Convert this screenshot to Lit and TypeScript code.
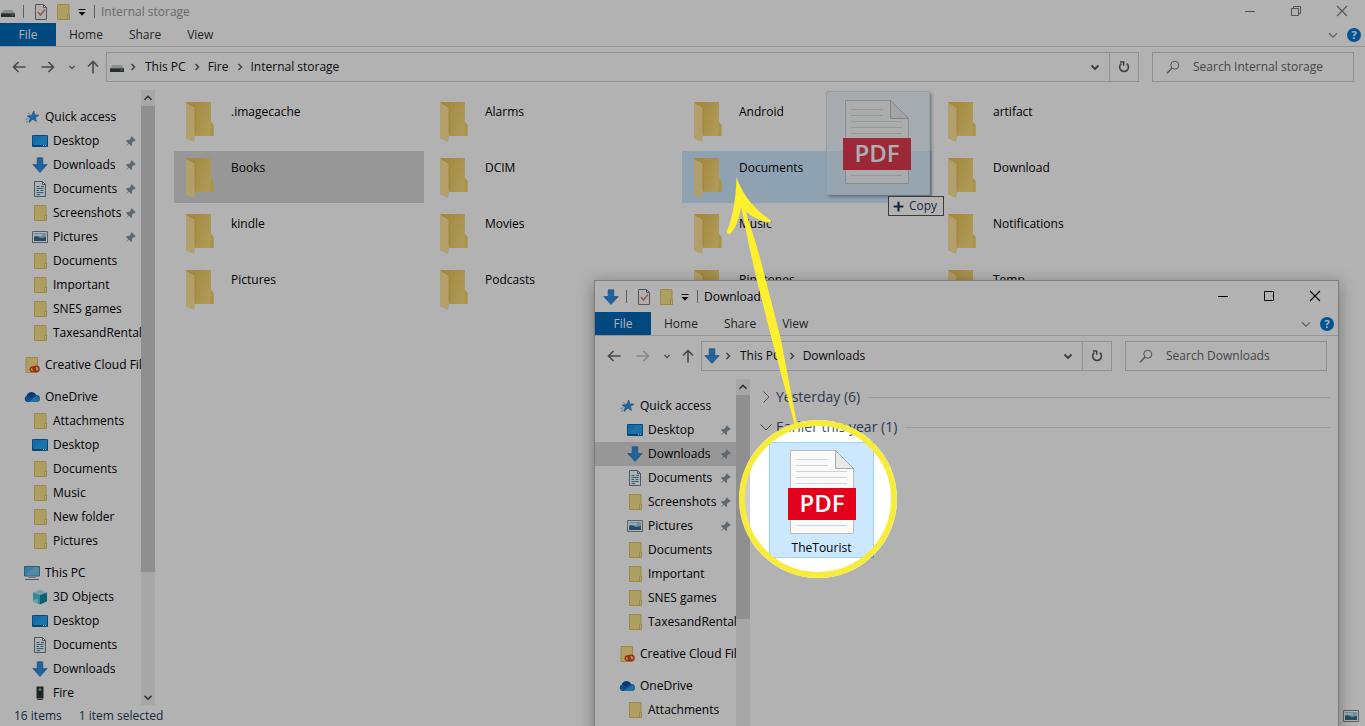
import { LitElement, html, svg, css, nothing } from "lit";
import { customElement, property } from "lit/decorators.js";
import { classMap } from "lit/directives/class-map.js";

const icon = (size: number, body: unknown) =>
  html`<svg class="glyph" width=${size} height=${size} viewBox="0 0 16 16" fill="none" aria-hidden="true">${body}</svg>`;

const ICONS: Record<string, unknown> = {
  drive: svg`<path d="M3.500 6h9L15 9.500H1z" fill="#c9cbcc"/><path d="M1 9.300h14V13H1z" fill="#3d4143"/><path d="M11.500 11h2" stroke="#7fd48a"/>`,
  download: svg`<path d="M5.200 .8h5.600V7.600H15.200L8 15.500.8 7.600H5.200z" fill="#2f8fe0" stroke="#2273bd" stroke-width=".7"/>`,
  star: svg`<path d="M9.800 2l1.100 3.900 4.100.3-3.500 2.200.9 4.100L8.900 10.200 5 13.500l1.300-4.500L3 7.100l4.500-.6z" fill="#2f97e6" stroke="#1d6fb5" stroke-width=".6"/><path d="M1.500 10.500l3-.8M2 13.500l2.500-2M4 4.500l2 1" stroke="#4aa3e8" stroke-width=".8"/>`,
  desktop: svg`<path d="M.5 2.500h15v11H.5z" fill="#1a9cf0" stroke="#0e69b0"/><path d="M1 13l9-10h5v10z" fill="#35aef8" opacity=".5"/><path d="M1 12.500h14" stroke="#0b5c9b"/><path d="M11 12.500h1M13 12.500h1" stroke="#d8f0ff"/>`,
  document: svg`<path d="M2.500.5h8l3 3v12h-11z" fill="#fdfefe" stroke="#6d7f8c"/><path d="M10.500.5v3h3" stroke="#6d7f8c"/><path d="M4.500 5.500h3M9 5.500h3M4.500 7.500h7M4.500 9.500h2.500M8.500 9.500h3M4.500 11.500h7M4.500 13.500h3.500" stroke="#3f8aa0"/>`,
  folder: svg`<path d="M2.500 .5h11.500v15h-11.500z" fill="#fbe48f" stroke="#e2c364"/><path d="M12.500 10.500h2v5h-2z" fill="#fdeeb0" stroke="#e2c364"/>`,
  pictures: svg`<path d="M.5 2.500h15v11H.5z" fill="#fff" stroke="#7d8b95"/><path d="M2 4h12v8H2z" fill="#9bd0ee"/><path d="M2 8c3-2 5 1 7 1s3-1 5-1v4H2z" fill="#3a6d8f"/><path d="M2 6h8" stroke="#dff1fb" stroke-width="2"/>`,
  creative: svg`<path d="M2 .5h11.500v15H2z" fill="#fbe48f" stroke="#e2c364"/><ellipse cx="8.800" cy="12.300" rx="2.600" ry="2.300" stroke="#e0401f" stroke-width="1.400"/><ellipse cx="12.200" cy="12" rx="2.900" ry="2.700" stroke="#e0401f" stroke-width="1.400"/><path d="M8 11l5 2.500" stroke="#e0401f"/>`,
  onedrive: svg`<path d="M3.500 13A3.200 3.200 0 0 1 2.800 6.800 5 5 0 0 1 12 6a3.500 3.500 0 0 1 .8 7z" fill="#0f6fc6"/><path d="M4.300 13l7.500-5.500A3.400 3.400 0 0 1 15.900 10c0 2-1.400 3-3 3z" fill="#2ba2ea"/><path d="M2.800 6.800A5 5 0 0 1 11.800 5.600L7 9z" fill="#0a56a5"/>`,
  pc: svg`<path d="M.5 1.500h15v9.500H.5z" fill="#52b5ec" stroke="#557b94"/><path d="M1 10.500L10 2h5v8.500z" fill="#86d0f6" opacity=".6"/><path d="M4 12.500h8" stroke="#a8b4bc"/><path d="M1 14.500h14" stroke="#6b7f8d"/>`,
  objects: svg`<path d="M8 .8l7 2.700L8 6 1 3.500z" fill="#a5e8f5"/><path d="M1 3.500L8 6v9.500L1 12.500z" fill="#46c3dd"/><path d="M15 3.500L8 6v9.500l7-3z" fill="#148ca8"/><path d="M0 11l6-1v4l-5-1z" fill="#c5f0f8" opacity=".7"/>`,
  fire: svg`<path d="M4.500 1.500h7v12h-7z" fill="#2f3536"/><path d="M5 14.500h6" stroke="#5c6364"/><circle cx="8" cy="4.500" r="1.300" fill="#7be07f"/>`,
  checkdoc: svg`<path d="M2.500.5h8l3 3v12h-11z" fill="#fbfbfb" stroke="#7b7b7b"/><path d="M10.500.5v3h3" stroke="#7b7b7b"/><path d="M5 8l2.500 3L12 5.500" stroke="#d08468" stroke-width="1.600"/>`,
  caret: svg`<path d="M4.500 5.500h7" stroke="#111"/><path d="M4.500 8h7L8 11.800z" fill="#111"/>`,
  pin: svg`<path d="M9.500 1.500l5 5-1 .8-1-.2-2.700 2.700.1 2.700-1.200 1L6 10.800l-3.800 3.400L5.200 10 2.500 7.300l1-1.200 2.700.1L8.900 3.500l-.2-1.200z" fill="#8795a3"/>`,
  back: svg`<path d="M14.500 8H2.500M7.500 3L2.500 8l5 5" stroke="#6a6a6a" stroke-width="1.600"/>`,
  forward: svg`<path d="M1.500 8h12M8.500 3l5 5-5 5" stroke="currentColor" stroke-width="1.600"/>`,
  up: svg`<path d="M8 14.500V2.500M3 7.500l5-5 5 5" stroke="#6a6a6a" stroke-width="1.600"/>`,
  down: svg`<path d="M4.500 6.500L8 10l3.500-3.500" stroke="currentColor" stroke-width="1.800"/>`,
  downThin: svg`<path d="M3.500 6l4.500 4.500L12.500 6" stroke="currentColor" stroke-width="1.300"/>`,
  right: svg`<path d="M6.500 5l3 3-3 3" stroke="#5e5e5e" stroke-width="1.500"/>`,
  rightThin: svg`<path d="M5.500 2.500L11 8l-5.500 5.500" stroke="#777"/>`,
  wideDown: svg`<path d="M2.500 5.500L8 11l5.500-5.500" stroke="#666"/>`,
  arrowUp: svg`<path d="M4 10l4-4 4 4" stroke="#444" stroke-width="1.800"/>`,
  arrowDown: svg`<path d="M4 6.500l4 4 4-4" stroke="#444" stroke-width="1.800"/>`,
  refresh: svg`<path d="M10.800 4.700A4.400 4.400 0 1 1 5.300 4.700M4 3h3.700v3.700" stroke="#5e5e5e" stroke-width="1.500"/>`,
  search: svg`<circle cx="9.800" cy="6.200" r="4" stroke="#777"/><path d="M6.900 9.200L2 14.200" stroke="#777" stroke-width="1.300"/>`,
  minimize: svg`<path d="M3 7.500h10" stroke="currentColor"/>`,
  maximize: svg`<path d="M3.500 2.500h9v9h-9z" stroke="currentColor"/>`,
  restore: svg`<path d="M3.500 4.500h7v7h-7zM5.500 4.500v-2h7v7h-2" stroke="currentColor"/>`,
  close: svg`<path d="M3 2l10 10M13 2L3 12" stroke="currentColor" stroke-width="1.100"/>`,
  plus: svg`<path d="M8 2v12M2 8h12" stroke="#1e395b" stroke-width="2.600"/>`,
};
const glyph = (name: string, size = 16) => icon(size, ICONS[name]);

const BASE = css`
  :host { box-sizing: border-box; font: 12px/16px "Open Sans", "Noto Sans", sans-serif; color: #000; }
  *, *::before, *::after { box-sizing: border-box; }
  button { font: inherit; color: inherit; background: none; border: 0; padding: 0; margin: 0; white-space: nowrap; display: flex; align-items: center; justify-content: center; }
  ul { list-style: none; margin: 0; padding: 0; }
  .glyph { display: block; flex: none; }
`;

interface Node { label: string; icon: string; root?: boolean; gap?: boolean; pinned?: boolean; }

const TREE: Node[] = [
  { label: "Quick access", icon: "star", root: true },
  { label: "Desktop", icon: "desktop", pinned: true },
  { label: "Downloads", icon: "download", pinned: true },
  { label: "Documents", icon: "document", pinned: true },
  { label: "Screenshots", icon: "folder", pinned: true },
  { label: "Pictures", icon: "pictures", pinned: true },
  { label: "Documents", icon: "folder" },
  { label: "Important", icon: "folder" },
  { label: "SNES games", icon: "folder" },
  { label: "TaxesandRental", icon: "folder" },
  { label: "Creative Cloud Fil", icon: "creative", root: true, gap: true },
  { label: "OneDrive", icon: "onedrive", root: true, gap: true },
  { label: "Attachments", icon: "folder" },
  { label: "Desktop", icon: "desktop" },
  { label: "Documents", icon: "folder" },
  { label: "Music", icon: "folder" },
  { label: "New folder", icon: "folder" },
  { label: "Pictures", icon: "folder" },
  { label: "This PC", icon: "pc", root: true, gap: true },
  { label: "3D Objects", icon: "objects" },
  { label: "Desktop", icon: "desktop" },
  { label: "Documents", icon: "document" },
  { label: "Downloads", icon: "download" },
  { label: "Fire", icon: "fire" },
];

@customElement("explorer-window")
export class ExplorerWindow extends LitElement {
  @property() heading = "";
  @property() emblem = "drive";
  @property({ type: Array }) path: string[] = [];
  @property() selected = "";
  @property({ type: Boolean, reflect: true }) maximized = false;
  @property({ type: Boolean }) canForward = false;
  @property({ type: Number }) thumb = 80;
  @property({ type: Array }) status: string[] = [];

  static styles = [BASE, css`
    :host { display: flex; flex-direction: column; background: #fff; overflow: hidden; }
    .title { display: flex; align-items: center; height: 31px; padding-left: 8px; flex: none; }
    :host([maximized]) .title { height: 23px; padding-left: 0; color: #999; }
    .rule { width: 1px; height: 13px; background: #888; }
    .rule.first { margin: 0 9px 0 7px; }
    .rule.last { margin: 0 6px 0 4px; }
    .quick { display: flex; gap: 6px; }
    .quick button:last-child { margin-left: -3px; }
    .name { flex: 1; font: inherit; margin: 0; }
    .caption { width: 46px; height: 100%; }
    :host([maximized]) .caption { color: #777; }
    .tabs { display: flex; height: 24px; border-bottom: 1px solid #d5d6d7; flex: none; align-items: stretch; padding-right: 4px; color: #333; }
    .tabs button { padding: 0 13px; }
    .tabs .file { background: #0067b8; color: #fff; width: 56px; }
    .tabs .fold { margin-left: auto; padding: 0; color: #888; }
    .tabs .help { width: 14px; height: 14px; border-radius: 50%; background: #0078d7; color: #fff; font-weight: 700; font-size: 11px; line-height: 14px; padding: 0; align-self: center; margin-left: 7px; }
    .bar { display: flex; align-items: center; padding: 5px 11px 8px 4px; flex: none; }
    .nav { display: flex; margin-right: 2px; color: #6a6a6a; }
    .nav .wide { width: 30px; }
    .nav .mid { width: 28px; }
    .nav .slim { width: 20px; }
    .nav .up { width: 22px; }
    .nav button:disabled { color: #c4c4c4; }
    .address { flex: 1; display: flex; height: 30px; border: 1px solid #cfcfcf; padding-left: 2px; align-items: center; min-width: 0; color: #111; }
    .crumb { padding: 0 3px; }
    .emblem + svg + .crumb { padding-left: 4px; }
    .drop { margin-left: auto; width: 28px; color: #555; }
    .refresh { width: 29px; height: 28px; border-left: 1px solid #cfcfcf; }
    .search { width: 202px; height: 30px; border: 1px solid #cfcfcf; margin-left: 13px; display: flex; align-items: center; padding-left: 12px; gap: 12px; }
    .search input { border: 0; outline: 0; padding: 0; background: none; font: inherit; width: 100%; min-width: 0; }
    .search input::placeholder { color: #666; opacity: 1; }
    .body { flex: 1; display: flex; min-height: 0; }
    .tree { width: 141px; overflow: hidden; padding-top: 15px; flex: none; }
    .node { display: flex; align-items: center; gap: 5px; height: 24px; padding-left: 32px; white-space: nowrap; }
    .node.root { padding-left: 24px; }
    .node.gap { margin-top: 8px; }
    .node.sel { background: #d9d9d9; }
    .node span { flex: 1; }
    .pin { margin: 0 4px 0 -5px; }
    .scroll { width: 14px; background: #f0f0f0; display: flex; flex-direction: column; flex: none; }
    .scroll button { height: 16px; flex: none; }
    .track { flex: 1; min-height: 0; }
    .grip { background: #cdcdcd; }
    .view { flex: 1; min-width: 0; overflow: hidden; }
    .status { display: flex; align-items: center; gap: 17px; height: 21px; padding: 0 6px 0 14px; flex: none; color: #1e395b; }
    .status .mode { margin-left: auto; }
  `];

  render() {
    return html`
      <header class="title">
        ${glyph(this.emblem)}
        <i class="rule first"></i>
        <div class="quick">
          <button aria-label="Properties">${glyph("checkdoc")}</button>
          <button aria-label="New folder">${glyph("folder")}</button>
          <button aria-label="Customize toolbar">${glyph("caret")}</button>
        </div>
        <i class="rule last"></i>
        <h1 class="name">${this.heading}</h1>
        <button class="caption" aria-label="Minimize">${glyph("minimize")}</button>
        <button class="caption" aria-label="Maximize">${glyph(this.maximized ? "restore" : "maximize")}</button>
        <button class="caption" aria-label="Close">${glyph("close")}</button>
      </header>
      <nav class="tabs">
        <button class="file">File</button>
        <button>Home</button><button>Share</button><button>View</button>
        <button class="fold" aria-label="Expand the ribbon">${glyph("downThin", 14)}</button>
        <button class="help" aria-label="Help">?</button>
      </nav>
      <div class="bar">
        <div class="nav">
          <button class="wide" aria-label="Back">${glyph("back")}</button>
          <button class="mid" aria-label="Forward" ?disabled=${!this.canForward}>${glyph("forward")}</button>
          <button class="slim" aria-label="Recent locations">${glyph("down", 12)}</button>
          <button class="up" aria-label="Up">${glyph("up")}</button>
        </div>
        <div class="address">
          <span class="emblem">${glyph(this.emblem)}</span>
          ${this.path.map((p) => html`${glyph("right")}<button class="crumb">${p}</button>`)}
          <button class="drop" aria-label="Previous locations">${glyph("down")}</button>
          <button class="refresh" aria-label="Refresh">${glyph("refresh")}</button>
        </div>
        <label class="search">${glyph("search")}
          <input type="text" aria-label="Search ${this.heading}" placeholder="Search ${this.heading}">
        </label>
      </div>
      <div class="body">
        <ul class="tree">
          ${TREE.map((n) => html`<li class=${classMap({ node: true, root: !!n.root, gap: !!n.gap, sel: !!n.pinned && n.label === this.selected })}>
            ${glyph(n.icon)}<span>${n.label}</span>${n.pinned ? html`<b class="pin">${glyph("pin", 13)}</b>` : nothing}
          </li>`)}
        </ul>
        <div class="scroll">
          <button aria-label="Scroll up">${glyph("arrowUp", 14)}</button>
          <div class="track"><div class="grip" style="height:${this.thumb}%"></div></div>
          <button aria-label="Scroll down">${glyph("arrowDown", 14)}</button>
        </div>
        <main class="view"><slot></slot></main>
      </div>
      <footer class="status">
        ${this.status.map((s) => html`<span>${s}</span>`)}
        <button class="mode" aria-label="Large icons">${glyph("pictures")}</button>
      </footer>`;
  }
}

@customElement("pdf-page")
export class PdfPage extends LitElement {
  static styles = css`
    :host { display: block; width: 68px; height: 86px; }
    svg { display: block; }
    text { font: 600 24px "Open Sans", "Noto Sans", sans-serif; fill: #fff; }
  `;
  render() {
    return html`<svg width="68" height="86" viewBox="0 0 68 86" role="img" aria-label="PDF document">
      <path d="M2.500 1.500h45l18 18v65h-63z" fill="#fafafa" stroke="#bcbcbc"/>
      <path d="M8 10.500h32M8 16.500h32M8 22.500h51M8 28.500h51M8 34.500h51M8 76.500h51" stroke="#d2d2d2"/>
      <path d="M47.500 1.500v18h18z" fill="#e8e8ea" stroke="#aaa"/>
      <path d="M0 39h68v32H0z" fill="#e2001a"/>
      <text x="34" y="63" text-anchor="middle">PDF</text>
    </svg>`;
  }
}

const FILES = [
  ".imagecache", "Alarms", "Android", "artifact",
  "Books", "DCIM", "Documents", "Download",
  "kindle", "Movies", "Music", "Notifications",
  "Pictures", "Podcasts", "Ringtones", "Temp",
];

@customElement("app-root")
export class AppRoot extends LitElement {
  static styles = [BASE, css`
    :host { display: block; position: relative; height: 100vh; overflow: hidden; background: #fff; }
    .main { height: 100%; }
    .front { position: absolute; left: 594px; right: 26px; top: 280px; height: 640px; border: 1px solid #b4b4b4; box-shadow: 0 3px 16px rgba(0, 0, 0, .35); }
    .files { display: grid; grid-template-columns: repeat(auto-fill, 250px); gap: 4px; padding: 5px 0 0 19px; }
    .file { display: flex; height: 52px; padding: 7px 12px; gap: 17px; }
    .file span { padding-top: 2px; }
    .file svg { flex: none; }
    .file.sel { background: #d9d9d9; }
    .file.target { background: #cce8ff; }
    .groups { padding: 3px 8px 0 8px; }
    .group { display: flex; align-items: center; height: 30px; font-size: 14px; line-height: 20px; font-weight: 400; color: #3f5273; margin: 0; gap: 2px; }
    .group::after { content: ""; flex: 1; height: 1px; background: #dcdfe4; margin-left: 6px; }
    .tile { width: 105px; height: 116px; margin-left: 11px; border: 1px solid #99d1ff; background: #cce8ff; display: flex; flex-direction: column; align-items: center; padding-top: 6px; gap: 5px; }
    .ghost { position: absolute; left: 826px; top: 91px; width: 104px; height: 104px; border: 1px solid #d3e2ec; border-radius: 2px; background: rgba(224, 240, 250, .55); box-shadow: 2px 2px 3px rgba(0, 0, 0, .3); padding: 7px 16px; }
    .ghost pdf-page { opacity: .76; }
    .tag { position: absolute; left: 888px; top: 196px; height: 20px; padding: 0 6px 0 3px; gap: 4px; border: 1px solid #555; background: #fff; color: #1e395b; display: flex; align-items: center; }
    .spot { position: absolute; left: 739px; top: 420px; width: 158px; height: 158px; border-radius: 50%; border: 6px solid #f7ec3c; box-shadow: 0 0 0 200vmax rgba(0, 0, 0, .3); pointer-events: none; }
    .arrow { position: absolute; left: 720px; top: 170px; pointer-events: none; }
  `];

  private folder() {
    return html`<svg width="28" height="40" viewBox="0 0 28 40" aria-hidden="true">
      <defs><linearGradient id="back" x1="0" x2="1" y1="0" y2=".4"><stop offset=".3" stop-color="#ecc85c"/><stop offset="1" stop-color="#fadc7c"/></linearGradient></defs>
      <path d="M1 0h24v20l2.500 3v11H9z" fill="url(#back)"/>
      <path d="M25 20l2.500 3v11H24z" fill="#f2d26a"/>
      <path d="M0 0l9 5.500V33L8 40l-8-3.500z" fill="#ffe49a"/>
      <path d="M0 0l9 5.500V33" stroke="#deb94f" stroke-width=".8" fill="none"/>
    </svg>`;
  }

  render() {
    return html`
      <explorer-window class="main" maximized canForward heading="Internal storage" emblem="drive"
        .path=${["This PC", "Fire", "Internal storage"]} .thumb=${80} .status=${["16 items", "1 item selected"]}>
        <div class="files">
          ${FILES.map((f) => html`<div class=${classMap({ file: true, sel: f === "Books", target: f === "Documents" })}>${this.folder()}<span>${f}</span></div>`)}
        </div>
      </explorer-window>
      <div class="ghost"><pdf-page></pdf-page></div>
      <div class="tag">${glyph("plus", 13)}Copy</div>
      <explorer-window class="front" heading="Downloads" emblem="download" selected="Downloads"
        .path=${["This PC", "Downloads"]} .thumb=${46}>
        <div class="groups">
          <h2 class="group">${glyph("rightThin")}Yesterday (6)</h2>
          <h2 class="group">${glyph("wideDown")}Earlier this year (1)</h2>
          <div class="tile"><pdf-page></pdf-page><span>TheTourist</span></div>
        </div>
      </explorer-window>
      <div class="spot"></div>
      <svg class="arrow" width="90" height="260" viewBox="720 170 90 260" fill="#fff02e" aria-hidden="true">
        <path d="M736.500 177C743 196 755 210 771 220.500C771.500 223 768 223 765 222C753 218 745 212 741 206C740 217 736 228 730.500 233.500C728 235 726 233 727 231C733 216 736 198 736.500 177z"/>
        <path d="M741 194C746 215 754 235 760 258L767 285L781 340L797 424H794.500L772 340L758 285L750 250C747 235 743 215 739.500 200z"/>
      </svg>`;
  }
}
